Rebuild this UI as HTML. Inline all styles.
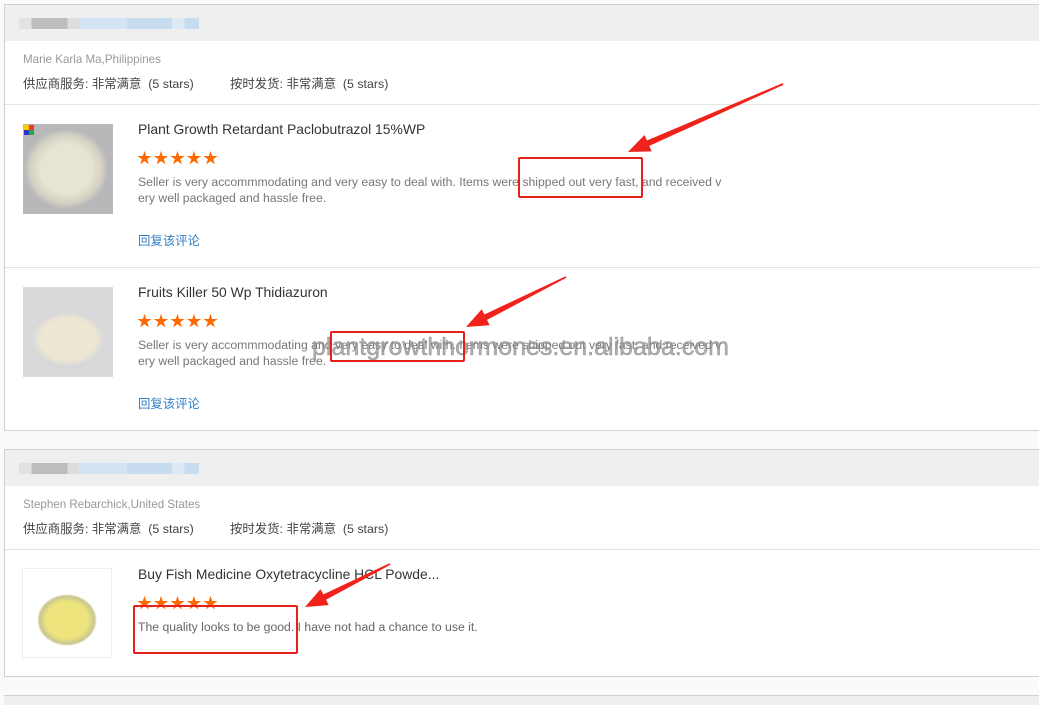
<!DOCTYPE html>
<html><head><meta charset="utf-8"><style>
*{margin:0;padding:0;box-sizing:border-box}
body{width:1039px;height:701px;background:#fafafa;position:relative;overflow:hidden;font-family:"Liberation Sans","Noto Sans CJK SC",sans-serif}
.a{position:absolute;white-space:nowrap}
.card{position:absolute;left:4px;width:1036px;background:#fff;border:1px solid #d0d0d0;border-right:none}
.hd{position:absolute;left:0;right:0;top:0;height:36px;background:#efefef}
.line{position:absolute;left:0;right:0;height:1px;background:#e3e3e3}
.name{font-size:11.6px;color:#999}
.rt{font-size:12.4px;color:#444}
.tt{font-size:13.9px;color:#333}
.ds{font-size:12.23px;color:#777;line-height:16px}
.rp{font-size:12.4px;color:#2f7fc7}
.st{color:#ff6a00;font-size:15px;letter-spacing:1.5px}
.img{position:absolute;width:90px;height:90px}
.box{position:absolute;border:2px solid #e8201b;border-radius:2px}
</style></head><body>
<div class="card" style="top:4px;height:427px">
 <div class="hd"></div>
 <div class="a" style="left:14px;top:13px;width:180px;height:11px;background:linear-gradient(90deg,#e2e2e2 0 7%,#bdbdbd 7% 27%,#ddd 27% 33%,#d3e3f3 33% 60%,#c8dcf0 60% 85%,#dde9f5 85% 92%,#c8dcf0 92%)"></div>
 <div class="line" style="top:99px"></div>
 <div class="line" style="top:262px"></div>
</div>
<div class="card" style="top:449px;height:228px">
 <div class="hd"></div>
 <div class="a" style="left:14px;top:13px;width:180px;height:11px;background:linear-gradient(90deg,#e2e2e2 0 7%,#bdbdbd 7% 27%,#ddd 27% 33%,#d3e3f3 33% 60%,#c8dcf0 60% 85%,#dde9f5 85% 92%,#c8dcf0 92%)"></div>
 <div class="line" style="top:99px"></div>
</div>
<div class="a" style="left:4px;top:695px;width:1036px;height:10px;background:#efefef;border-top:1px solid #d0d0d0"></div>

<div class="a name" style="left:23px;top:53px">Marie Karla Ma,Philippines</div>
<div class="a rt" style="left:23px;top:74px">供应商服务: 非常满意&nbsp;&nbsp;(5 stars)</div>
<div class="a rt" style="left:230px;top:74px">按时发货: 非常满意&nbsp;&nbsp;(5 stars)</div>

<div class="img" style="left:23px;top:124px;background:radial-gradient(ellipse 42px 40px at 48% 50%,#e8e4d2 60%,#d4d1c4 85%,#b8b8ba 100%)"></div>
<div class="a" style="left:24px;top:125px;width:10px;height:10px;background:conic-gradient(#e33 0 25%,#2a4 25% 50%,#33c 50% 75%,#fc0 75%)"></div>
<div class="a tt" style="left:138px;top:121px">Plant Growth Retardant Paclobutrazol 15%WP</div>
<div class="a st" style="left:137px;top:147px">★★★★★</div>
<div class="a ds" style="left:138px;top:174px">Seller is very accommmodating and very easy to deal with. Items were shipped out very fast, and received v<br>ery well packaged and hassle free.</div>
<div class="a rp" style="left:138px;top:231px">回复该评论</div>

<div class="img" style="left:23px;top:287px;background:radial-gradient(ellipse 40px 30px at 50% 58%,#ece6d2 70%,#d8d8da 90%,#d9d9dc 100%)"></div>
<div class="a tt" style="left:138px;top:284px">Fruits Killer 50 Wp Thidiazuron</div>
<div class="a st" style="left:137px;top:310px">★★★★★</div>
<div class="a ds" style="left:138px;top:337px">Seller is very accommmodating and very easy to deal with. Items were shipped out very fast, and received v<br>ery well packaged and hassle free.</div>
<div class="a rp" style="left:138px;top:394px">回复该评论</div>
<div class="a" style="left:312px;top:333px;font-size:25px;color:rgba(150,150,150,0.75);-webkit-text-stroke:0.5px rgba(110,110,110,0.6)">plantgrowthhormones.en.alibaba.com</div>

<div class="a name" style="left:23px;top:498px">Stephen Rebarchick,United States</div>
<div class="a rt" style="left:23px;top:519px">供应商服务: 非常满意&nbsp;&nbsp;(5 stars)</div>
<div class="a rt" style="left:230px;top:519px">按时发货: 非常满意&nbsp;&nbsp;(5 stars)</div>
<div class="img" style="left:22px;top:568px;border:1px solid #eee;background:radial-gradient(ellipse 30px 26px at 50% 58%,#ede47e 70%,#c8c690 92%,#fff 100%)"></div>
<div class="a tt" style="left:138px;top:566px">Buy Fish Medicine Oxytetracycline HCL Powde...</div>
<div class="a st" style="left:137px;top:592px">★★★★★</div>
<div class="a ds" style="left:138px;top:619px;color:#666">The quality looks to be good. I have not had a chance to use it.</div>

<div class="box" style="left:518px;top:157px;width:125px;height:41px"></div>
<div class="box" style="left:330px;top:331px;width:135px;height:31px"></div>
<div class="box" style="left:133px;top:605px;width:165px;height:49px"></div>
<svg class="a" style="left:0;top:0" width="1039" height="701">
<g fill="#f0231c">
<polygon points="783.4,84.9 649.3,145.9 651.7,151.4 628,152 644.5,135.0 646.9,140.5 782.6,83.1"/>
<polygon points="566.4,277.8 487.0,319.9 489.7,325.2 466,327 481.7,309.2 484.4,314.5 565.6,276.2"/>
<polygon points="390.4,564.8 326.0,599.8 328.7,605.1 305,607 320.5,589.1 323.3,594.4 389.6,563.2"/>
</g></svg>
</body></html>
